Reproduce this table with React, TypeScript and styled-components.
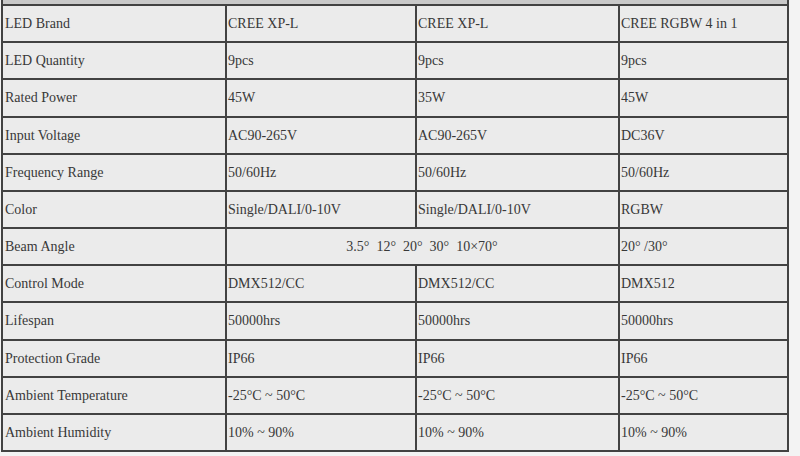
import React from "react";
import styled, { createGlobalStyle } from "styled-components";

const Global = createGlobalStyle`
  html, body { margin: 0; padding: 0; background: #f3f3f3; }
  body { font-family: "Liberation Serif", "Times New Roman", serif; }
`;

const Page = styled.div`
  width: 800px;
  height: 456px;
  overflow: hidden;
  background: #f3f3f3;
  padding-left: 1px;
  box-sizing: border-box;
`;

const Cap = styled.div`
  width: 788px;
  height: 4px;
  box-sizing: border-box;
  background: #c9c9c9;
  border-left: 2px solid #424242;
  border-right: 2px solid #424242;
`;

const Grid = styled.div`
  width: 788px;
  height: 448px;
  box-sizing: border-box;
  padding: 2px;
  display: grid;
  grid-template-columns: 222px 188px 201px 167px;
  grid-template-rows: repeat(12, 1fr);
  gap: 2px;
  background: #424242;
`;

const Cell = styled.div<{ $span?: number; $center?: boolean }>`
  background: #ebebeb;
  display: flex;
  align-items: center;
  justify-content: ${(p) => (p.$center ? "center" : "flex-start")};
  padding: 1px 2px 0;
  font-size: 14px;
  color: #383838;
  white-space: pre;
  overflow: hidden;
  grid-column: ${(p) => (p.$span ? `span ${p.$span}` : "auto")};
`;

const LabelCell = styled(Cell)`
  padding-left: 2px;
`;

const ValueCell = styled(Cell)`
  padding-left: 1px;
`;

type Row = { label: string; values: string[]; spanFirst?: boolean };

const rows: Row[] = [
  { label: "LED Brand", values: ["CREE XP-L", "CREE XP-L", "CREE RGBW 4 in 1"] },
  { label: "LED Quantity", values: ["9pcs", "9pcs", "9pcs"] },
  { label: "Rated Power", values: ["45W", "35W", "45W"] },
  { label: "Input Voltage", values: ["AC90-265V", "AC90-265V", "DC36V"] },
  { label: "Frequency Range", values: ["50/60Hz", "50/60Hz", "50/60Hz"] },
  { label: "Color", values: ["Single/DALI/0-10V", "Single/DALI/0-10V", "RGBW"] },
  { label: "Beam Angle", values: ["3.5°  12°  20°  30°  10×70°", "20° /30°"], spanFirst: true },
  { label: "Control Mode", values: ["DMX512/CC", "DMX512/CC", "DMX512"] },
  { label: "Lifespan", values: ["50000hrs", "50000hrs", "50000hrs"] },
  { label: "Protection Grade", values: ["IP66", "IP66", "IP66"] },
  { label: "Ambient Temperature", values: ["-25°C ~ 50°C", "-25°C ~ 50°C", "-25°C ~ 50°C"] },
  { label: "Ambient Humidity", values: ["10% ~ 90%", "10% ~ 90%", "10% ~ 90%"] },
];

export default function App() {
  return (
    <>
      <Global />
      <Page>
        <Cap />
        <Grid>
          {rows.map((r) => (
            <React.Fragment key={r.label}>
              <LabelCell>{r.label}</LabelCell>
              {r.values.map((v, i) =>
                r.spanFirst && i === 0 ? (
                  <ValueCell key={i} $span={2} $center>
                    {v}
                  </ValueCell>
                ) : (
                  <ValueCell key={i}>{v}</ValueCell>
                )
              )}
            </React.Fragment>
          ))}
        </Grid>
      </Page>
    </>
  );
}
